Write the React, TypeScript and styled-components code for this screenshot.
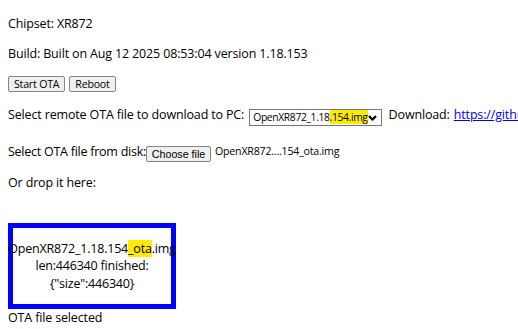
import React from "react";
import styled, { createGlobalStyle } from "styled-components";

const GlobalStyle = createGlobalStyle`
  html, body {
    margin: 0;
    padding: 0;
    background: #ffffff;
    overflow: hidden;
  }
  body {
    font-family: "Open Sans", "Noto Sans", sans-serif;
    font-size: 12.5px;
    letter-spacing: -0.15px;
    color: #000000;
  }
`;

const Page = styled.div`
  padding: 2px 8px 0;
  width: 900px;
`;

const Para = styled.p<{ $h?: number; $align?: string }>`
  margin: 13px 0;
  line-height: 17px;
  height: ${(p) => (p.$h ? `${p.$h}px` : "auto")};
  display: flex;
  align-items: ${(p) => p.$align || "flex-start"};
  white-space: nowrap;
`;

const Tight = styled.span`
  letter-spacing: -0.25px;
`;

const Button = styled.button<{ $ml?: number }>`
  font-family: "Open Sans", "Noto Sans", sans-serif;
  font-size: 10.6px;
  letter-spacing: -0.2px;
  color: #000000;
  height: 16px;
  padding: 0 5px;
  margin: 0 0 0 ${(p) => p.$ml || 0}px;
  border: 1px solid #858585;
  border-radius: 2px;
  background: #efefef;
  line-height: 14px;
  display: inline-flex;
  align-items: center;
`;

const Select = styled.div`
  margin: 3px 0 0 5px;
  height: 17px;
  width: 139px;
  box-sizing: border-box;
  border: 1px solid #767676;
  background: #ffffff;
  display: flex;
  align-items: center;
  justify-content: space-between;
  padding: 0 4px 0 3px;
  font-size: 10.3px;
  letter-spacing: -0.35px;
`;

const Mark = styled.span`
  background: #ffeb00;
`;

const Chevron = () => (
  <svg width="9" height="6" viewBox="0 0 9 6" aria-hidden="true">
    <polyline points="1,1 4.5,4.5 8,1" fill="none" stroke="#000" strokeWidth="2.2" />
  </svg>
);

const Label = styled.span<{ $ml?: number }>`
  margin-left: ${(p) => p.$ml || 0}px;
`;

const Link = styled.a`
  color: #0000ee;
  text-decoration: underline;
  margin-left: 4px;
`;

const FileButton = styled.button`
  font-family: "Liberation Sans", Arial, sans-serif;
  font-size: 10.7px;
  color: #000000;
  height: 16px;
  width: 65px;
  margin-top: 3px;
  padding: 0;
  border: 1px solid #858585;
  border-radius: 2px;
  background: #efefef;
  display: inline-flex;
  align-items: center;
  justify-content: center;
`;

const FileName = styled.span`
  font-size: 10.6px;
  letter-spacing: -0.2px;
  margin-left: 4px;
`;

const DropZone = styled.div`
  margin-top: 32px;
  width: 168px;
  height: 86px;
  box-sizing: border-box;
  border: 5px solid #0000ff;
  display: flex;
  flex-direction: column;
  align-items: center;
  justify-content: center;
  line-height: 17.5px;
  letter-spacing: -0.2px;
  white-space: nowrap;
`;

const Status = styled.div`
  line-height: 17px;
`;

export default function App() {
  return (
    <>
      <GlobalStyle />
      <Page>
        <Para>Chipset: XR872</Para>
        <Para>Build: Built on Aug 12 2025 08:53:04 version 1.18.153</Para>
        <Para $h={18} $align="center">
          <Button>Start OTA</Button>
          <Button $ml={4}>Reboot</Button>
        </Para>
        <Para $h={24}>
          <span>Select remote OTA file to download to PC:</span>
          <Select>
            <span>
              OpenXR872_1.18<Mark>.154.img</Mark>
            </span>
            <Chevron />
          </Select>
          <Label $ml={7}>Download:</Label>
          <Link href="#">
            https://github.com/openshwprojects/OpenBK7231T_App/releases/download/1.18.154/OpenXR872_1.18.154.img
          </Link>
        </Para>
        <Para $h={18}>
          <Tight>Select OTA file from disk:</Tight>
          <FileButton>Choose file</FileButton>
          <FileName>OpenXR872....154_ota.img</FileName>
        </Para>
        <Para>Or drop it here:</Para>
        <DropZone>
          <div>
            OpenXR872_1.18.154<Mark>_ota</Mark>.img
          </div>
          <div>len:446340 finished:</div>
          <div>{'{"size":446340}'}</div>
        </DropZone>
        <Status>OTA file selected</Status>
      </Page>
    </>
  );
}
